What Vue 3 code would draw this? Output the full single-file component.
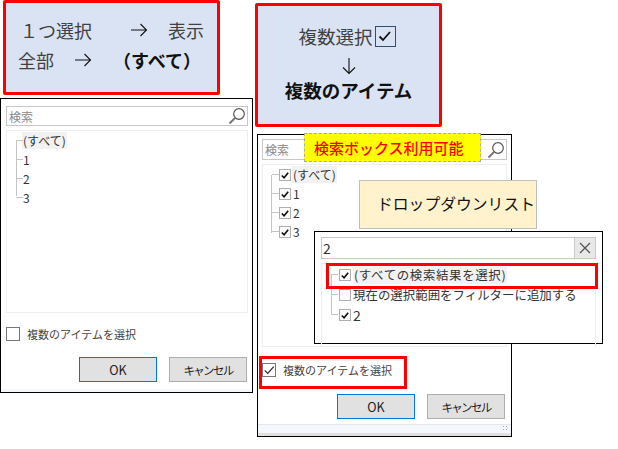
<script setup>
const plainItems = ['1', '2', '3']
const checkedItems = ['(すべて)', '1', '2', '3']
</script>

<template>
  <div class="canvas">
    <section class="note note-a">
      <div class="row-one">
        <span class="one">１つ選択</span>
        <svg class="arrow" width="17" height="14" viewBox="0 0 17 14"><path d="M0 7h15.500M9.500 1l6 6-6 6" fill="none" stroke="#111" stroke-width="1.100"/></svg>
        <span>表示</span>
      </div>
      <div class="row-two">
        <span>全部</span>
        <svg class="arrow" width="17" height="14" viewBox="0 0 17 14"><path d="M0 7h15.500M9.500 1l6 6-6 6" fill="none" stroke="#111" stroke-width="1.100"/></svg>
        <b>（すべて）</b>
      </div>
    </section>

    <section class="note note-b">
      <div class="multi">複数選択<span class="big-check"><svg width="18" height="18" viewBox="0 0 18 18"><path d="M3.500 9.500l3.500 3.500 7-8" fill="none" stroke="#111" stroke-width="1.800"/></svg></span></div>
      <svg class="down" width="14" height="17" viewBox="0 0 14 17"><path d="M7 0v15.500M1 9.500l6 6 6-6" fill="none" stroke="#111" stroke-width="1.100"/></svg>
      <b class="multi-bold">複数のアイテム</b>
    </section>

    <section class="dialog dialog-a">
      <div class="search"><span class="hint">検索</span>
        <svg class="lens" width="18" height="18" viewBox="0 0 18 18"><circle cx="11" cy="7" r="5.300" fill="none" stroke="#555" stroke-width="1.200"/><path d="M7 11l-5.500 5.500" stroke="#777" stroke-width="2"/></svg>
      </div>
      <div class="list">
        <div class="tree-line line-a"></div>
        <div class="item"><span class="tick-h"></span><span class="sel">(すべて)</span></div>
        <div v-for="i in plainItems" :key="i" class="item"><span class="tick-h"></span><span>{{ i }}</span></div>
      </div>
      <label class="multi-check"><span class="box"></span><span>複数のアイテムを選択</span></label>
      <div class="buttons"><button class="btn primary">OK</button><button class="btn"><span class="cancel">キャンセル</span></button></div>
      <div class="foot"></div>
    </section>

    <section class="dialog dialog-b">
      <div class="search"><span class="hint">検索</span>
        <svg class="lens" width="18" height="18" viewBox="0 0 18 18"><circle cx="11" cy="7" r="5.300" fill="none" stroke="#555" stroke-width="1.200"/><path d="M7 11l-5.500 5.500" stroke="#777" stroke-width="2"/></svg>
      </div>
      <div class="list">
        <div class="tree-line line-b"></div>
        <div v-for="(i, n) in checkedItems" :key="i" class="item checked">
          <span class="tick-h"></span>
          <span class="mini"><svg width="10" height="10" viewBox="0 0 11 11"><path d="M2 6l2.500 2.500L9 3" fill="none" stroke="#111" stroke-width="1.800"/></svg></span>
          <span :class="{ sel: n === 0 }">{{ i }}</span>
        </div>
      </div>
      <div class="multi-check"><span class="box"><svg width="12" height="12" viewBox="0 0 14 14"><path d="M2 7.500l3.500 3.500 7-8" fill="none" stroke="#222" stroke-width="1.300"/></svg></span><span>複数のアイテムを選択</span></div>
      <div class="buttons"><button class="btn primary">OK</button><button class="btn"><span class="cancel">キャンセル</span></button></div>
      <div class="foot foot-grid"><span class="grip"></span></div>
    </section>

    <div class="callout-yellow">検索ボックス利用可能</div>
    <div class="callout-cream">ドロップダウンリスト</div>

    <section class="panel">
      <div class="panel-search"><span class="typed">2</span><span class="clear"><svg width="14" height="14" viewBox="0 0 14 14"><path d="M2 2l10 10M12 2L2 12" stroke="#555" stroke-width="1.300"/></svg></span></div>
      <div class="panel-list">
        <div class="tree-line line-c"></div>
        <div class="item checked panel-item"><span class="tick-h"></span><span class="mini"><svg width="10" height="10" viewBox="0 0 11 11"><path d="M2 6l2.500 2.500L9 3" fill="none" stroke="#111" stroke-width="1.800"/></svg></span><span class="sel results">(すべての検索結果を選択)</span></div>
        <div class="item checked panel-item"><span class="tick-h"></span><span class="mini"></span><span>現在の選択範囲をフィルターに追加する</span></div>
        <div class="item checked panel-item"><span class="tick-h"></span><span class="mini"><svg width="10" height="10" viewBox="0 0 11 11"><path d="M2 6l2.500 2.500L9 3" fill="none" stroke="#111" stroke-width="1.800"/></svg></span><span class="digit">2</span></div>
      </div>
    </section>

    <div class="red-frame frame-results"></div>
    <div class="red-frame frame-multi"></div>
  </div>
</template>

<style scoped>
.canvas {
  position: relative;
  width: 618px;
  height: 449px;
  background: #fff;
  overflow: hidden;
  font-family: "Noto Sans CJK JP", "Noto Sans", sans-serif;
  color: #404040;
}
.note {
  position: absolute;
  box-sizing: border-box;
  background: #dae3f3;
  border: 3px solid #f00;
  border-radius: 2px;
}
.note-a { left: 3px; top: 0; width: 217px; height: 95px; font-size: 18px; line-height: 24px; }
.row-one, .row-two { display: flex; align-items: center; white-space: nowrap; }
.row-one { padding: 15px 0 0 14px; }
.row-one .arrow { margin: 0 20px 0 39px; }
.row-two { padding: 6px 0 0 12px; }
.row-two .arrow { margin: 0 21px 0 21px; }
.row-two b { color: #111; font-size: 18px; }
.note-b {
  left: 255px; top: 3px; width: 187px; height: 124px;
  display: flex; flex-direction: column; align-items: center;
  font-size: 18.500px;
}
.multi { display: flex; align-items: center; margin: 18px 3px 0 0; height: 24px; line-height: 24px; }
.big-check { box-sizing: border-box; width: 21px; height: 21px; border: 1.500px solid #2f4f6f; margin-left: 2px; display: flex; }
.down { margin-top: 10px; }
.multi-bold { color: #111; line-height: 26px; margin-top: 2px; }
.dialog {
  position: absolute;
  box-sizing: border-box;
  background: #fff;
  border: 1px solid #000;
  display: flex;
  flex-direction: column;
  font-size: 12px;
  color: #333;
}
.dialog-a { left: 0; top: 98px; width: 253px; height: 295px; padding: 7px 4px 0 5px; }
.dialog-b { left: 257px; top: 134px; width: 255px; height: 303px; padding: 4px 4px 0 4px; }
.search {
  box-sizing: border-box;
  height: 20px;
  border: 1px solid #c8c8c8;
  display: flex;
  align-items: center;
  justify-content: space-between;
  padding: 0 1px 0 2px;
  flex: none;
}
.hint { color: #8a8a8a; font-size: 12px; }
.dialog-b .search { height: 21px; }
.list {
  position: relative;
  box-sizing: border-box;
  margin-top: 4px;
  height: 183px;
  border: 1px solid #eee;
  flex: none;
  font-size: 12px;
}
.item { display: flex; align-items: center; height: 19px; position: relative; padding-left: 16px; color: #333; line-height: 17px; }
.sel { background: #f2f2f2; padding: 0 1px; margin-left: -1px; }
.results { letter-spacing: 0.650px; margin-left: 0; }
.tick-h { position: absolute; left: 9px; top: 9px; width: 7px; border-top: 1px solid #c4c4c4; }
.tree-line { position: absolute; border-left: 1px solid #c4c4c4; }
.line-a { left: 9px; top: 10px; height: 55px; }
.line-b { left: 8px; top: 10px; height: 58px; }
.line-c { left: 9px; top: 10px; height: 40px; }
.mini {
  box-sizing: border-box;
  width: 12px; height: 12px;
  border: 1px solid #b0b0b0;
  background: #fafafa;
  margin-right: 2px;
  display: flex;
  align-items: center;
  justify-content: center;
  flex: none;
}
.multi-check { display: flex; align-items: center; gap: 7px; height: 15px; margin-top: 13px; font-size: 11px; color: #444; }
.box { box-sizing: border-box; width: 14px; height: 14px; border: 1px solid #777; display: flex; align-items: center; justify-content: center; flex: none; }
.buttons { display: flex; justify-content: flex-end; gap: 12px; margin-top: 16px; padding-right: 1px; }
.dialog-b .multi-check { margin-top: 15px; }
.dialog-b .buttons { margin-top: 17px; padding-right: 2px; }
.btn {
  box-sizing: border-box;
  width: 78px; height: 25px;
  background: #e1e1e1;
  border: 1px solid #adadad;
  font: inherit;
  font-size: 12.500px;
  color: #222;
  padding: 0;
}
.cancel { font-size: 11.500px; letter-spacing: -1.700px; }
.btn.primary { border: 1.500px solid #0078d7; }
.foot { margin: 7px -4px 0 -5px; flex: 1; background: #f4f7fb; }
.foot-grid { position: relative; margin: 5px -4px 0 -4px; border-top: 1px solid #e4e8ee; border-bottom: 3px solid #e0e0e0; }
.grip { position: absolute; right: 3px; bottom: 2px; width: 6px; height: 6px; background: radial-gradient(circle at center, #a8a8a8 0 1px, transparent 1px) 0 0 / 3px 3px; }
.callout-yellow {
  position: absolute;
  box-sizing: border-box;
  left: 304px; top: 133px; width: 177px; height: 29px;
  background: #ff0;
  border: 1px dashed #aaa;
  color: #f00;
  font-weight: 500;
  font-size: 15px;
  line-height: 27px;
  padding-left: 9px;
  white-space: nowrap;
}
.callout-cream {
  position: absolute;
  box-sizing: border-box;
  left: 359px; top: 180px; width: 178px; height: 49px;
  background: #fff2cc;
  border: 1px solid #bfbfbf;
  color: #111;
  font-size: 15.800px;
  line-height: 45px;
  padding-left: 17px;
  white-space: nowrap;
}
.panel {
  position: absolute;
  box-sizing: border-box;
  left: 314px; top: 231px; width: 289px; height: 113px;
  background: #fff;
  border: 1px solid #000;
  padding: 5px 6px 0 6px;
  font-size: 12.450px;
}
.panel-search {
  box-sizing: border-box;
  height: 22px;
  border: 1px solid #c8c8c8;
  display: flex;
  align-items: center;
  justify-content: space-between;
}
.typed { padding-left: 1px; color: #333; font-size: 14px; }
.clear { width: 20px; height: 20px; background: #e8e8e8; border-left: 1px solid #ccc; display: flex; align-items: center; justify-content: center; }
.panel-list { position: relative; box-sizing: border-box; height: 84px; margin-top: 4px; padding-top: 1px; border: 1px solid #eee; border-bottom: none; }
.panel-item { height: 20px; padding-left: 17px; }
.digit { font-size: 14px; }
.red-frame { position: absolute; box-sizing: border-box; border: 3px solid #f00; }
.frame-results { left: 326px; top: 263px; width: 272px; height: 26px; }
.frame-multi { left: 259px; top: 356px; width: 148px; height: 33px; }
</style>
